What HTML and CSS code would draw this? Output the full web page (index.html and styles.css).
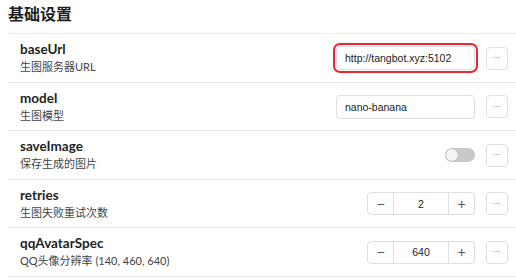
FILE: index.html
```html
<!DOCTYPE html>
<html>
  <head>
    <title>基础设置</title>
    <link rel="stylesheet" href="styles.css">
  </head>
  <body>
    <div class="settings">
      <div class="settings-title">基础设置</div>

      <div class="row">
        <div class="info">
          <div class="name">baseUrl</div>
          <div class="desc">生图服务器URL</div>
        </div>
        <div class="control">
          <input class="text-input focused" type="text" value="http://tangbot.xyz:5102">
          <button class="more">···</button>
        </div>
      </div>

      <div class="row">
        <div class="info">
          <div class="name">model</div>
          <div class="desc">生图模型</div>
        </div>
        <div class="control">
          <input class="text-input" type="text" value="nano-banana">
          <button class="more">···</button>
        </div>
      </div>

      <div class="row">
        <div class="info">
          <div class="name">saveImage</div>
          <div class="desc">保存生成的图片</div>
        </div>
        <div class="control">
          <span class="switch"><span class="knob"></span></span>
          <button class="more">···</button>
        </div>
      </div>

      <div class="row">
        <div class="info">
          <div class="name">retries</div>
          <div class="desc">生图失败重试次数</div>
        </div>
        <div class="control">
          <div class="stepper">
            <span class="step">−</span>
            <span class="value">2</span>
            <span class="step">+</span>
          </div>
          <button class="more">···</button>
        </div>
      </div>

      <div class="row">
        <div class="info">
          <div class="name">qqAvatarSpec</div>
          <div class="desc">QQ头像分辨率 (140, 460, 640)</div>
        </div>
        <div class="control">
          <div class="stepper">
            <span class="step">−</span>
            <span class="value">640</span>
            <span class="step">+</span>
          </div>
          <button class="more">···</button>
        </div>
      </div>
    </div>
  </body>
</html>
```

FILE: styles.css
```css
body {
  margin: 0;
  background: #fff;
  font-family: Lato, "Noto Sans CJK SC", sans-serif;
  color: #1f1f1f;
}
.settings {
  padding-left: 8px;
}
.settings-title {
  font-size: 16px;
  font-weight: bold;
  line-height: 24px;
  padding: 2px 0 7px;
  border-bottom: 1px solid #ebebeb;
}
.row {
  display: flex;
  align-items: center;
  justify-content: space-between;
  padding: 6px 8px 5.5px 12px;
  border-bottom: 1px solid #ebebeb;
}
.name {
  font-size: 13.5px;
  font-weight: bold;
  line-height: 18px;
}
.desc {
  font-size: 11px;
  line-height: 18px;
  color: #444;
}
.control {
  display: flex;
  align-items: center;
  gap: 11px;
}
.text-input {
  box-sizing: border-box;
  width: 139px;
  height: 24px;
  padding: 0 8px;
  border: 1px solid #dcdfe6;
  border-radius: 4px;
  font-family: "Liberation Sans", Arial, sans-serif;
  font-size: 10.5px;
  color: #222;
  outline: none;
}
.text-input.focused {
  outline: 2px solid #ec2530;
  outline-offset: 1px;
}
.more {
  box-sizing: border-box;
  width: 22px;
  height: 23px;
  padding: 0;
  border: 1px solid #dcdfe6;
  border-radius: 4px;
  background: #fff;
  color: #555;
  font-size: 8px;
  line-height: 1;
  font-family: "Liberation Sans", Arial, sans-serif;
}
.switch {
  display: flex;
  align-items: center;
  width: 30px;
  height: 14px;
  border-radius: 7px;
  background: #c8c9cc;
}
.knob {
  width: 12px;
  height: 12px;
  margin-left: 1px;
  border-radius: 50%;
  background: #f4f4f4;
  box-shadow: 0 0 1px rgba(0, 0, 0, 0.3);
}
.stepper {
  box-sizing: border-box;
  display: flex;
  width: 108px;
  height: 23px;
  border: 1px solid #dcdfe6;
  border-radius: 4px;
  font-family: "Liberation Sans", Arial, sans-serif;
  font-size: 10.5px;
}
.step {
  width: 25px;
  display: flex;
  align-items: center;
  justify-content: center;
  font-size: 14px;
  color: #555;
}
.step:first-child {
  border-right: 1px solid #dcdfe6;
}
.step:last-child {
  border-left: 1px solid #dcdfe6;
}
.value {
  flex: 1;
  display: flex;
  align-items: center;
  justify-content: center;
  color: #222;
}
```
